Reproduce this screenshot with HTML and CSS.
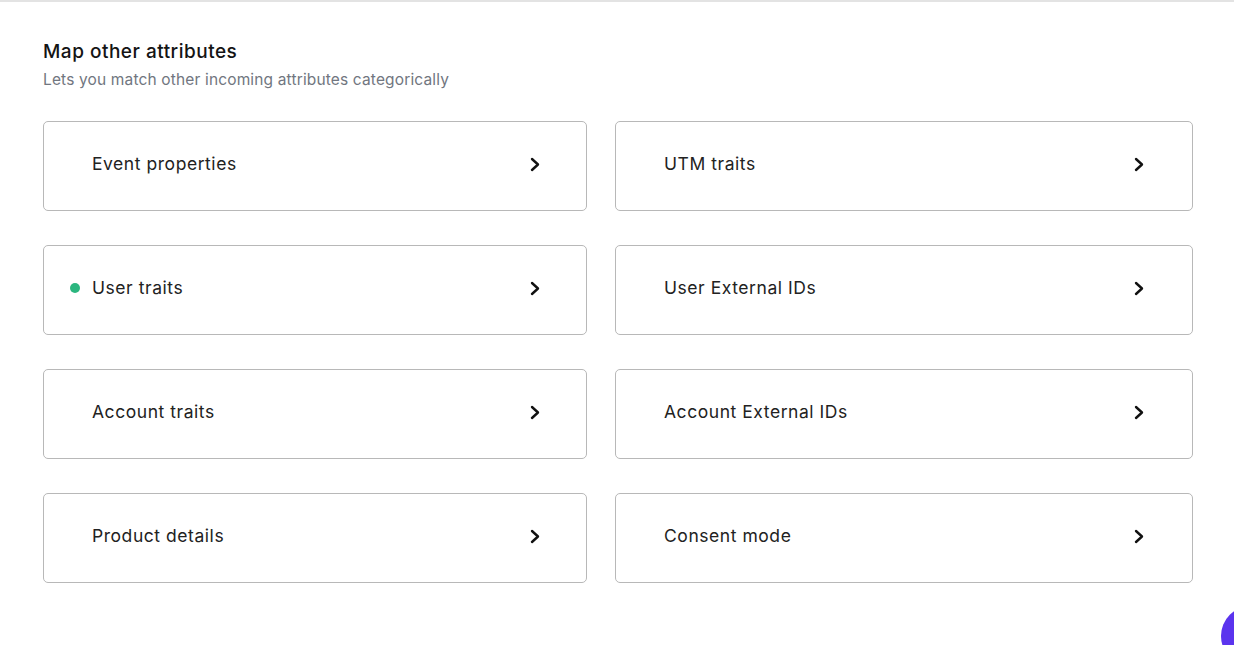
FILE: index.html
```html
<!DOCTYPE html>
<html>
<head>
<meta charset="utf-8">
<link rel="stylesheet" href="styles.css">
</head>
<body>
<div class="page">
  <section class="section">
    <h2 class="title">Map other attributes</h2>
    <p class="subtitle">Lets you match other incoming attributes categorically</p>
    <div class="grid">
      <div class="card"><span class="label">Event properties</span><svg class="chev" viewBox="0 0 12 16"><path d="M3 2.5 L9 8 L3 13.5" /></svg></div>
      <div class="card"><span class="label">UTM traits</span><svg class="chev" viewBox="0 0 12 16"><path d="M3 2.5 L9 8 L3 13.5" /></svg></div>
      <div class="card"><span class="dot"></span><span class="label">User traits</span><svg class="chev" viewBox="0 0 12 16"><path d="M3 2.5 L9 8 L3 13.5" /></svg></div>
      <div class="card"><span class="label">User External IDs</span><svg class="chev" viewBox="0 0 12 16"><path d="M3 2.5 L9 8 L3 13.5" /></svg></div>
      <div class="card"><span class="label">Account traits</span><svg class="chev" viewBox="0 0 12 16"><path d="M3 2.5 L9 8 L3 13.5" /></svg></div>
      <div class="card"><span class="label">Account External IDs</span><svg class="chev" viewBox="0 0 12 16"><path d="M3 2.5 L9 8 L3 13.5" /></svg></div>
      <div class="card"><span class="label">Product details</span><svg class="chev" viewBox="0 0 12 16"><path d="M3 2.5 L9 8 L3 13.5" /></svg></div>
      <div class="card"><span class="label">Consent mode</span><svg class="chev" viewBox="0 0 12 16"><path d="M3 2.5 L9 8 L3 13.5" /></svg></div>
    </div>
  </section>
  <div class="fab"></div>
</div>
</body>
</html>
```
FILE: styles.css
```css
* { box-sizing: border-box; }
html, body { margin: 0; padding: 0; background: #fff; }
body {
  font-family: "Inter", "Liberation Sans", sans-serif;
  color: #1f1f1f;
  width: 1234px;
  height: 645px;
  overflow: hidden;
}
.page {
  position: relative;
  height: 645px;
  border-top: 2px solid #e3e3e3;
}
.section {
  padding: 38px 0 0 43px;
}
.title {
  margin: 0;
  font-size: 19px;
  font-weight: 500;
  line-height: 24px;
  color: #141414;
  letter-spacing: 0.5px;
}
.subtitle {
  margin: 6px 0 0;
  font-size: 15.5px;
  line-height: 20px;
  color: #717680;
  font-weight: 400;
  letter-spacing: 0.15px;
}
.grid {
  margin-top: 31px;
  display: grid;
  grid-template-columns: 544px 578px;
  column-gap: 28px;
  row-gap: 34px;
}
.card {
  height: 90px;
  border: 1px solid #b8b8b8;
  border-radius: 5px;
  display: flex;
  align-items: center;
  padding: 0 45px 0 48px;
  position: relative;
}
.card:nth-child(even) { padding-right: 47px; }
.label {
  flex: 1;
  font-size: 17.5px;
  color: #222;
  margin-top: -5px;
  letter-spacing: 0.55px;
}
.dot {
  position: absolute;
  left: 26px;
  top: 37px;
  width: 10px;
  height: 10px;
  border-radius: 50%;
  background: #2bb67f;
}
.chev {
  width: 12px;
  height: 17px;
  margin-top: -4px;
}
.chev path {
  fill: none;
  stroke: #111;
  stroke-width: 2.4;
  stroke-linecap: round;
  stroke-linejoin: round;
}
.fab {
  position: absolute;
  left: 1221px;
  top: 604px;
  width: 60px;
  height: 60px;
  border-radius: 50%;
  background: #5b34ee;
}
```
